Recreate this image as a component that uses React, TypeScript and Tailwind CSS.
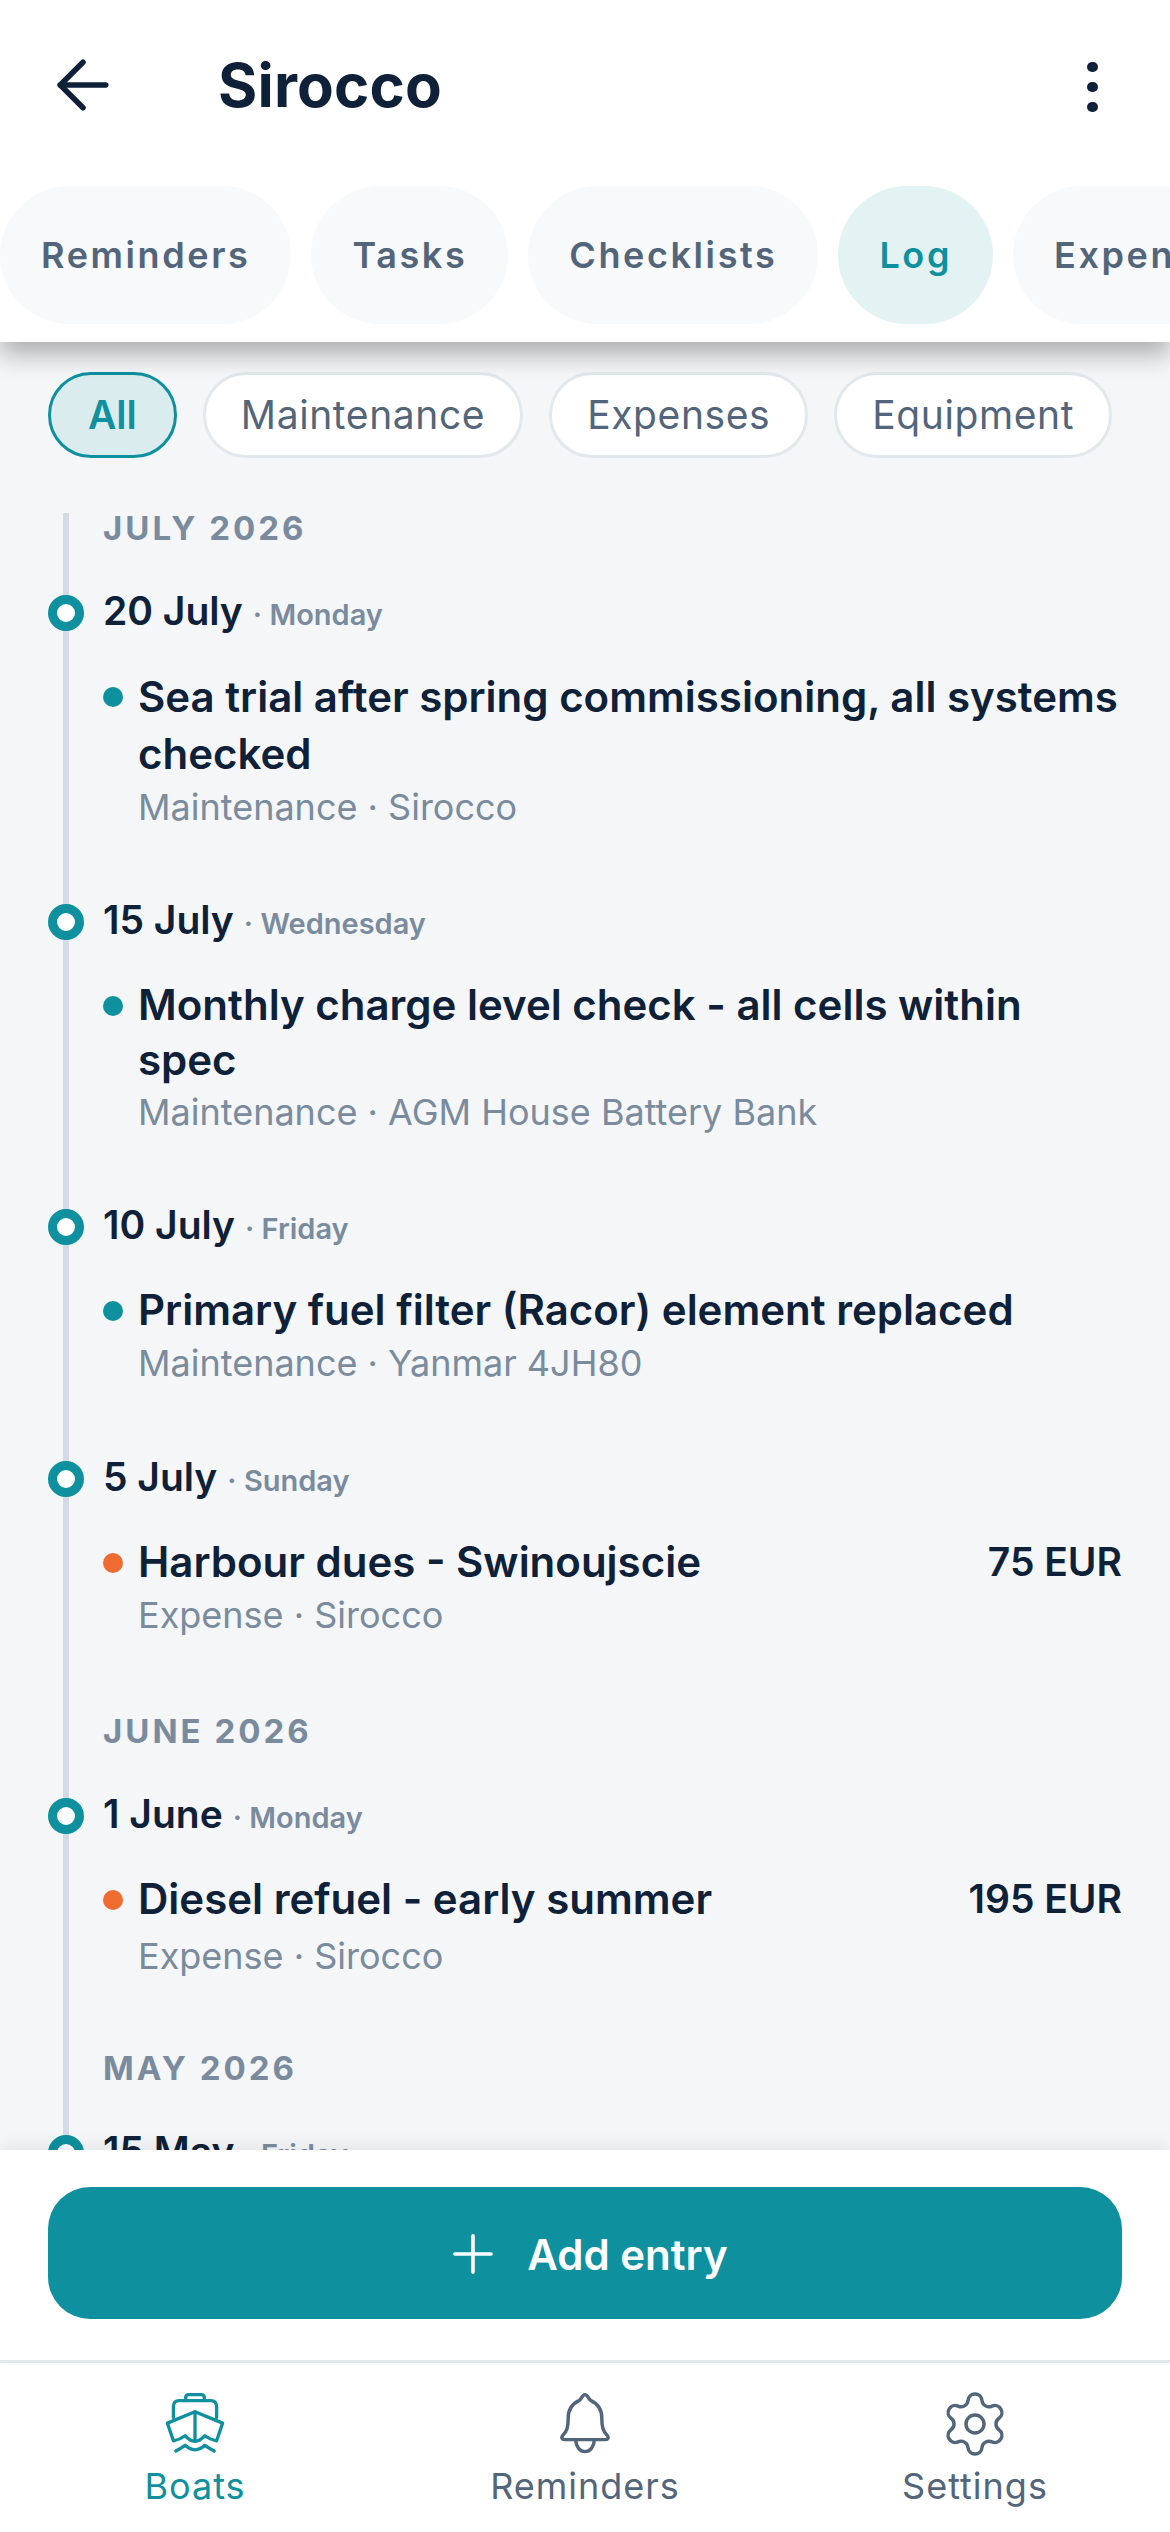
import { ArrowLeft, Plus, Settings } from "lucide-react";

const TABS = ["Reminders", "Tasks", "Checklists", "Log", "Expenses"];
const CHIPS = ["All", "Maintenance", "Expenses", "Equipment"];

type Entry = { title: string; meta: string; kind: "maintenance" | "expense"; amount?: string };
type Day = { date: string; weekday: string; entry: Entry; gap: string; titleLine?: string; metaGap?: string };

const JULY: Day[] = [
  {
    date: "20 July",
    weekday: "Monday",
    gap: "mb-[61px]",
    titleLine: "leading-[57px]",
    entry: { title: "Sea trial after spring commissioning, all systems checked", meta: "Maintenance · Sirocco", kind: "maintenance" },
  },
  {
    date: "15 July",
    weekday: "Wednesday",
    gap: "mb-[61px]",
    titleLine: "leading-[55px]",
    entry: { title: "Monthly charge level check - all cells within spec", meta: "Maintenance · AGM House Battery Bank", kind: "maintenance" },
  },
  {
    date: "10 July",
    weekday: "Friday",
    gap: "mb-[62px]",
    entry: { title: "Primary fuel filter (Racor) element replaced", meta: "Maintenance · Yanmar 4JH80", kind: "maintenance" },
  },
  {
    date: "5 July",
    weekday: "Sunday",
    gap: "mb-[70px]",
    entry: { title: "Harbour dues - Swinoujscie", meta: "Expense · Sirocco", kind: "expense", amount: "75 EUR" },
  },
];

const JUNE: Day[] = [
  {
    date: "1 June",
    weekday: "Monday",
    gap: "mb-[66px]",
    metaGap: "mt-[4px]",
    entry: { title: "Diesel refuel - early summer", meta: "Expense · Sirocco", kind: "expense", amount: "195 EUR" },
  },
];

const MAY: Day[] = [
  {
    date: "15 May",
    weekday: "Friday",
    gap: "mb-[63px]",
    entry: { title: "Rigging inspection", meta: "Maintenance · Sirocco", kind: "maintenance" },
  },
];

const BoatIcon = () => (
  <svg width="72" height="72" viewBox="0 0 24 24" fill="none" stroke="#0e909f" strokeWidth="1.1" strokeLinecap="round" strokeLinejoin="round">
    <path d="M8.9 4.2 V3.2 Q8.9 2.2 9.9 2.2 H14.1 Q15.1 2.2 15.1 3.2 V4.2" />
    <path d="M4.8 9.8 V6.2 Q4.8 4.2 6.8 4.2 H17.2 Q19.2 4.2 19.2 6.2 V9.8" />
    <path d="M12 7.9 L2.8 11.7 L4.8 17.6 Q7 17.2 8.7 15.9 Q10.4 17.8 12 17.8 Q13.6 17.8 15.3 15.9 Q17 17.2 19.2 17.6 L21.2 11.7 Z" />
    <path d="M12 7.9 V17.6" />
    <path d="M5.6 21 Q7.4 20 8.7 19.1 Q10.4 20.6 12 20.6 Q13.6 20.6 15.3 19.1 Q16.6 20 18.4 21" />
  </svg>
);

const BellIcon = () => (
  <svg width="72" height="72" viewBox="0 0 24 24" fill="none" stroke="#52657a" strokeWidth="1.15" strokeLinecap="round" strokeLinejoin="round">
    <path d="M12 2.2 C13 2.2 13 3.6 14 4.2 C16.6 5.4 17.6 7.4 17.6 10 C17.6 13 18 14.4 19.4 15.8 C20 16.5 19.7 17.2 18.8 17.2 H5.2 C4.3 17.2 4 16.5 4.6 15.8 C6 14.4 6.4 13 6.4 10 C6.4 7.4 7.4 5.4 10 4.2 C11 3.6 11 2.2 12 2.2 Z" />
    <path d="M8.9 17.4 C9 19.6 10.3 21.2 12 21.2 C13.7 21.2 15 19.6 15.1 17.4" />
  </svg>
);

const DayBlock = ({ day }: { day: Day }) => {
  const { entry } = day;
  return (
    <div className={day.gap}>
      <div className="relative flex items-baseline h-[54px] leading-[54px]">
        <span className="absolute left-[-55px] top-[11px] w-[36px] h-[36px] rounded-full bg-white border-[9px] border-[#0e909f]" />
        <span className="text-[39px] font-semibold text-[#0f2138]">{day.date}</span>
        <span className="text-[29px] font-semibold text-[#7a8b9e] ml-[10px]">· {day.weekday}</span>
      </div>
      <div className="flex mt-[30px]">
        <span
          className={`mt-[19px] w-[20px] h-[20px] rounded-full shrink-0 ${
            entry.kind === "expense" ? "bg-[#ee6c2f]" : "bg-[#0e909f]"
          }`}
        />
        <div className="ml-[15px] flex-1">
          <div className="flex justify-between">
            <span className={`text-[42px] font-semibold text-[#0f2138] ${day.titleLine ?? "leading-[56px]"}`}>{entry.title}</span>
            {entry.amount && (
              <span className="text-[39px] leading-[56px] font-semibold text-[#0f2138] shrink-0">{entry.amount}</span>
            )}
          </div>
          <div className={`text-[36px] leading-[50px] text-[#7a8b9e] ${day.metaGap ?? ""}`}>{entry.meta}</div>
        </div>
      </div>
    </div>
  );
};

const Month = ({ label, days }: { label: string; days: Day[] }) => (
  <section>
    <div className="h-[42px] leading-[42px] text-[33px] font-bold tracking-[3px] text-[#7a8b9e] mb-[35px]">{label}</div>
    {days.map((day) => (
      <DayBlock key={day.date} day={day} />
    ))}
  </section>
);

export default function App() {
  return (
    <div className="w-[1170px] h-[2532px] flex flex-col bg-[#f4f6f8] overflow-hidden [font-family:Inter,sans-serif]">
      <header className="relative z-10 bg-white h-[342px] shrink-0 shadow-[0_12px_24px_rgba(0,0,0,0.3)]">
        <div className="flex items-center h-[170px] pl-[44px] pr-[72px]">
          <ArrowLeft size={78} strokeWidth={1.7} className="text-[#0f2138]" />
          <h1 className="ml-[96px] flex-1 text-[60px] font-bold text-[#0f2138] tracking-[0.2px]">Sirocco</h1>
          <div className="flex flex-col gap-[10px] mt-[4px]">
            <span className="w-[11px] h-[10px] rounded-full bg-[#0f2138]" />
            <span className="w-[11px] h-[10px] rounded-full bg-[#0f2138]" />
            <span className="w-[11px] h-[10px] rounded-full bg-[#0f2138]" />
          </div>
        </div>
        <div className="flex gap-[20px] mt-[16px] overflow-hidden">
          {TABS.map((tab) => (
            <div
              key={tab}
              className={`h-[138px] px-[41px] flex items-center justify-center shrink-0 rounded-[69px] text-[36px] font-semibold tracking-[2.6px] ${
                tab === "Log" ? "bg-[#e3f3f3] text-[#0e909f]" : "bg-[#f7f9fa] text-[#52657a]"
              }`}
            >
              {tab}
            </div>
          ))}
        </div>
      </header>

      <main className="relative flex-1 min-h-0 overflow-hidden">
        <div className="flex gap-[26px] pl-[48px] pt-[30px]">
          {CHIPS.map((chip) => (
            <div
              key={chip}
              className={`h-[86px] flex items-center rounded-[43px] text-[39px] border-[3px] ${
                chip === "All"
                  ? "px-[37px] bg-[#dbecee] border-[#0e909f] text-[#0e909f] font-semibold"
                  : "px-[35px] bg-white border-[#e3e8ec] text-[#52657a] tracking-[0.6px]"
              }`}
            >
              {chip}
            </div>
          ))}
        </div>
        <div className="relative mt-[49px] pl-[103px] pr-[48px]">
          <span className="absolute left-[63px] top-[6px] w-[6px] h-[2000px] bg-[#d3dce6]" />
          <Month label="JULY 2026" days={JULY} />
          <Month label="JUNE 2026" days={JUNE} />
          <Month label="MAY 2026" days={MAY} />
        </div>
      </main>

      <div className="relative z-10 bg-white shrink-0 h-[213px] pt-[37px] px-[48px] shadow-[0_-6px_14px_rgba(0,0,0,0.06)] border-b-[3px] border-[#e3e8ec]">
        <button className="w-full h-[132px] pt-[2px] rounded-[42px] bg-[#0e909f] text-white flex items-center justify-center gap-[23px] text-[42px] font-semibold">
          <Plus size={62} strokeWidth={1.4} />
          Add entry
        </button>
      </div>

      <nav className="bg-white shrink-0 h-[169px] grid grid-cols-3">
        <div className="flex flex-col items-center pt-[25px] text-[#0e909f]">
          <BoatIcon />
          <span className="text-[36px] leading-[44px] tracking-[1px] mt-[4px]">Boats</span>
        </div>
        <div className="flex flex-col items-center pt-[25px] text-[#52657a]">
          <BellIcon />
          <span className="text-[36px] leading-[44px] tracking-[1px] mt-[4px]">Reminders</span>
        </div>
        <div className="flex flex-col items-center pt-[25px] text-[#52657a]">
          <Settings size={72} strokeWidth={1.15} />
          <span className="text-[36px] leading-[44px] tracking-[1px] mt-[4px]">Settings</span>
        </div>
      </nav>
    </div>
  );
}
